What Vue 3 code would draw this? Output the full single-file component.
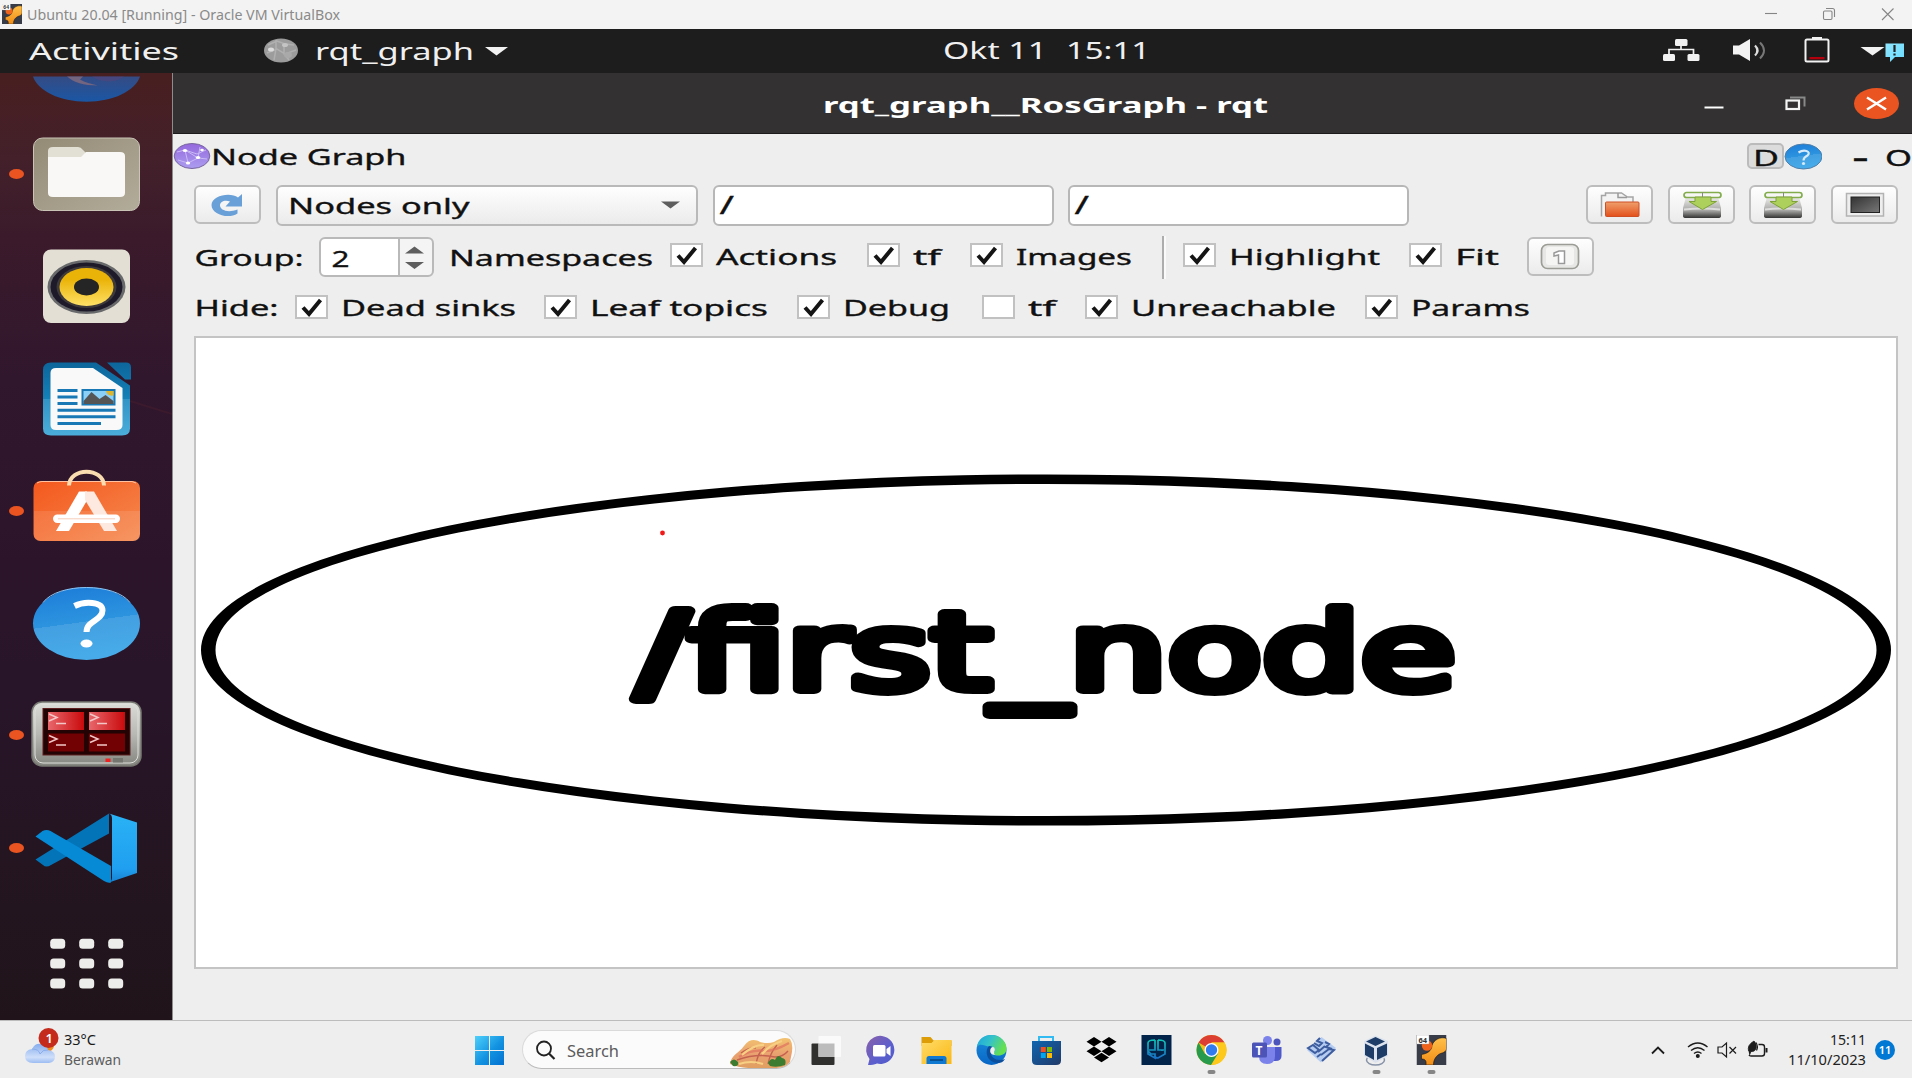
<script setup>
import { h } from 'vue'

const T = (p) =>
  h('svg', { class: 'fit', width: p.box || p.w, height: p.h || 40 }, [
    h('text', { x: p.x || 0, y: p.y, textLength: p.w, lengthAdjust: 'spacingAndGlyphs', 'font-size': p.s || 22.5, fill: 'currentColor' }, p.t),
  ])
T.props = ['t', 'w', 'box', 'h', 'y', 's', 'x']

const groupChecks = [
  { t: 'Actions', w: 121, slot: 151, on: true },
  { t: 'tf', w: 28, slot: 57, on: true },
  { t: 'Images', w: 116, slot: 146, on: true },
]
const viewChecks = [
  { t: 'Highlight', w: 151, slot: 180, on: true },
  { t: 'Fit', w: 44, slot: 72, on: true },
]
const hideChecks = [
  { t: 'Dead sinks', w: 175, slot: 203, on: true },
  { t: 'Leaf topics', w: 178, slot: 207, on: true },
  { t: 'Debug', w: 107, slot: 139, on: true },
  { t: 'tf', w: 28, slot: 57, on: false },
  { t: 'Unreachable', w: 205, slot: 234, on: true },
  { t: 'Params', w: 119, slot: 147, on: true },
]
const panes = [[48, 33], [89, 33], [48, 54.5], [89, 54.5]]
</script>

<template>
  <div class="screen">
    <svg class="defs" width="0" height="0">
      <defs>
        <linearGradient id="gFiles" x1="0" y1="0" x2="1" y2="1"><stop offset="0" stop-color="#948b76" /><stop offset="1" stop-color="#b2ac9a" /></linearGradient>
        <linearGradient id="gFox" x1="0" y1="0" x2="0" y2="1"><stop offset="0" stop-color="#354b83" /><stop offset="1" stop-color="#1a57a5" /></linearGradient>
        <linearGradient id="gSpk" x1="0" y1="0" x2="0" y2="1"><stop offset=".3" stop-color="#eab308" /><stop offset="1" stop-color="#ffe166" /></linearGradient>
        <linearGradient id="gDoc" x1="0" y1="0" x2="0" y2="1"><stop offset="0" stop-color="#0d659b" /><stop offset=".5" stop-color="#1481b7" /><stop offset=".5" stop-color="#3194c5" /><stop offset="1" stop-color="#4badd9" /></linearGradient>
        <linearGradient id="gBag" x1="0" y1="0" x2="1" y2="1"><stop offset="0" stop-color="#f4581d" /><stop offset="1" stop-color="#f58a50" /></linearGradient>
        <linearGradient id="gHelp" x1="0" y1="0" x2="0.2" y2="1"><stop offset="0" stop-color="#1c7bd8" /><stop offset=".55" stop-color="#2c94df" /><stop offset=".55" stop-color="#439fe1" /><stop offset="1" stop-color="#47abe9" /></linearGradient>
        <linearGradient id="gMon" x1="0" y1="0" x2="0" y2="1"><stop offset="0" stop-color="#dcdcd8" /><stop offset=".5" stop-color="#b8b8b4" /><stop offset="1" stop-color="#84857f" /></linearGradient>
        <linearGradient id="gRed" x1="0" y1="0" x2="1" y2="0"><stop offset="0" stop-color="#e8676c" /><stop offset="1" stop-color="#c90a0c" /></linearGradient>
        <linearGradient id="gCode" x1="0" y1="0" x2="0" y2="1"><stop offset="0" stop-color="#29b2f5" /><stop offset=".8" stop-color="#209ff0" /><stop offset="1" stop-color="#1780cf" /></linearGradient>
        <linearGradient id="gOrb" x1="0" y1="0" x2="0" y2="1"><stop offset="0" stop-color="#9468dd" /><stop offset="1" stop-color="#ac9df0" /></linearGradient>
        <linearGradient id="gOpen" x1="0" y1="0" x2="0" y2="1"><stop offset="0" stop-color="#efa06d" /><stop offset="1" stop-color="#e3501b" /></linearGradient>
        <linearGradient id="gDisk" x1="0" y1="0" x2="0" y2="1"><stop offset="0" stop-color="#eeeeec" /><stop offset=".65" stop-color="#a5a5a3" /><stop offset="1" stop-color="#333" /></linearGradient>
        <linearGradient id="gScr" x1="0" y1="0" x2="1" y2="1"><stop offset="0" stop-color="#333" /><stop offset="1" stop-color="#777" /></linearGradient>
        <linearGradient id="gWin" x1="0" y1="0" x2="1" y2="1"><stop offset="0" stop-color="#4ed0fb" /><stop offset=".55" stop-color="#1292e0" /><stop offset="1" stop-color="#0370d0" /></linearGradient>
        <linearGradient id="gCloud" x1="0" y1="0" x2="0" y2="1"><stop offset="0" stop-color="#86adee" /><stop offset=".7" stop-color="#cfdffa" /><stop offset="1" stop-color="#9cbcf2" /></linearGradient>
        <linearGradient id="gChat" x1="0" y1="0" x2="1" y2="1"><stop offset="0" stop-color="#8a60a8" /><stop offset=".6" stop-color="#5b5fce" /><stop offset="1" stop-color="#5059c9" /></linearGradient>
        <linearGradient id="gFold" x1="0" y1="0" x2="1" y2="1"><stop offset="0" stop-color="#ffdc6b" /><stop offset="1" stop-color="#fbb811" /></linearGradient>
        <linearGradient id="gEdge" x1="0" y1="0" x2="1" y2=".4"><stop offset="0" stop-color="#1aa6df" /><stop offset=".5" stop-color="#35c3c8" /><stop offset="1" stop-color="#66e04f" /></linearGradient>
        <linearGradient id="gEdge2" x1="0" y1="0" x2="0" y2="1"><stop offset="0" stop-color="#1b8fdc" /><stop offset="1" stop-color="#0866c6" /></linearGradient>
        <linearGradient id="gStore" x1="0" y1="0" x2="1" y2="1"><stop offset="0" stop-color="#0f65b0" /><stop offset="1" stop-color="#213a69" /></linearGradient>
        <linearGradient id="gShield" x1="0" y1="0" x2="0" y2="1"><stop offset="0" stop-color="#12c2b4" /><stop offset="1" stop-color="#1a72c5" /></linearGradient>
        <linearGradient id="gVx" x1="0" y1="0" x2="0" y2="1"><stop offset="0" stop-color="#ffc04a" /><stop offset="1" stop-color="#f28c14" /></linearGradient>
        <linearGradient id="gFood" x1="0" y1="0" x2="0" y2="1"><stop offset="0" stop-color="#f2c26f" /><stop offset=".55" stop-color="#e9a070" /><stop offset="1" stop-color="#e0a060" /></linearGradient>
        <linearGradient id="gBubble" x1="0" y1="0" x2="1" y2="1"><stop offset="0" stop-color="#8fe6ff" /><stop offset="1" stop-color="#6cdcff" /></linearGradient>
        <symbol id="vbox64" viewBox="0 0 30 30">
          <rect width="30" height="30" fill="#383b48" />
          <path d="M30 3.500C24 1 17 5 15.500 10.500 15 16 11 18.500 5 19.500v4.500c4 0 5 2 4.500 6H17c0-6 3-9.500 7-11.500 4-1 6-2.500 6-5z" fill="url(#gVx)" stroke="#15161c" stroke-width=".6" />
          <circle cx="10.500" cy="10.500" r="5.200" fill="#f0641c" />
          <rect width="12.500" height="9" fill="#fff" stroke="#999" stroke-width=".4" />
          <text x="2" y="7.500" font-size="7.500" font-weight="700" fill="#333">64</text>
        </symbol>
      </defs>
    </svg>

    <header class="host-bar">
      <svg class="host-icon" width="20" height="20"><use href="#vbox64" width="20" height="20" /></svg>
      <T t="Ubuntu 20.04 [Running] - Oracle VM VirtualBox" :w="313" :h="29" :y="19.500" :s="14.500" />
      <svg class="host-controls" width="150" height="29" fill="none" stroke="#858585" stroke-width="1.100">
        <path d="M3 13.500h12" />
        <rect x="61.500" y="11" width="8.500" height="8.500" rx="1.200" />
        <path d="M64 8.500h6.500a2 2 0 0 1 2 2v6.500" />
        <path d="M120 8.500l11.500 11.500M131.500 8.500l-11.500 11.500" />
      </svg>
    </header>

    <div class="guest">
      <nav class="top-bar">
        <T class="activities" t="Activities" :w="150" :h="44" :y="31" :s="23" />
        <svg class="orb" width="34" height="44"><ellipse cx="17" cy="21.500" rx="17" ry="12" fill="#9c9c9c" /><path d="M4 16l9-4 8 3 9 1M3 24l10-4 8 5 11-4M12 11v9l-2 11M20 14v11l5 6" stroke="#b0b0b0" stroke-width="1.500" fill="none" /><ellipse cx="7" cy="20.500" rx="3" ry="2" fill="#dcdcdc" /><ellipse cx="21" cy="16" rx="3" ry="2" fill="#c4c4c4" /><ellipse cx="24" cy="26" rx="4" ry="3" fill="#a9a9a9" /></svg>
        <T t="rqt_graph" :w="159" :h="44" :y="31" :s="23" />
        <svg class="caret" width="23" height="44"><path d="M0 18h23l-11.500 8.500z" fill="#f2f2f2" /></svg>
        <div class="clock">
          <T t="Okt 11" :w="104" :box="123" :h="44" :y="29.500" :s="23" />
          <T t="15:11" :w="84" :h="44" :y="29.500" :s="23" />
        </div>
        <svg class="status" width="252" height="44">
          <g fill="#f2f2f2">
            <rect x="15" y="10" width="12.500" height="7" rx="1.500" /><rect x="3" y="25" width="12" height="7" rx="1.500" /><rect x="27.500" y="25" width="12" height="7" rx="1.500" />
            <path d="M9 25v-4.500h24.500V25M21 17v4" fill="none" stroke="#f2f2f2" stroke-width="1.700" />
            <path d="M73 16.500h6l11-6.500v22l-11-6.500h-6z" />
            <path d="M95 16.500q5 5 0 10" fill="none" stroke="#ddd" stroke-width="2.200" /><path d="M100 13.500q8 8 0 16" fill="none" stroke="#777" stroke-width="2" />
            <rect x="145.500" y="10.500" width="23" height="22" rx="1.500" fill="none" stroke="#f2f2f2" stroke-width="2" /><rect x="152" y="8" width="10" height="3" />
            <rect x="149.500" y="28" width="15" height="2.300" fill="#b3000c" />
            <path d="M200.500 18h24l-12 8.500z" />
          </g>
          <path d="M225.500 14.500h18.500v13.500h-9l-5 5v-5h-4.500z" fill="url(#gBubble)" />
          <path d="M234.500 16v7M234.500 24.500v2" stroke="#222" stroke-width="2.200" />
        </svg>
      </nav>

      <div class="desktop">
        <aside class="dock">
          <svg width="172" height="45"><path d="M33 3.500h107C135 18 113 28.700 86.500 28.700S38 18 33 3.500z" fill="url(#gFox)" /><path d="M92 3.500h32c-7 6-22 7-32 0z" fill="#53457a" opacity=".6" /><path d="M67 3.500h16l-3 3c5 3 11 4 18 6-15 0-24-3-31-9z" fill="#73647f" /></svg>
          <svg width="172" height="112.300">
            <ellipse class="run" cx="16.500" cy="56" rx="7.500" ry="5" />
            <rect x="33.500" y="20" width="106" height="72.500" rx="9" fill="url(#gFiles)" stroke="#c9c4b6" stroke-width="1" />
            <path d="M48 39v-6q0-4 5-4h25q3 0 5 3l4 4v10H48z" fill="#e2dfd5" />
            <path d="M48 39h33l5-5h34q5 0 5 4v37q0 4-5 4H53q-5 0-5-4z" fill="#f9f8f6" />
          </svg>
          <svg width="172" height="112.300">
            <rect x="43" y="19.500" width="87" height="73.500" rx="8" fill="#e3dfd4" />
            <ellipse cx="86.500" cy="57" rx="39" ry="27" fill="#68696b" /><ellipse cx="86.500" cy="57" rx="36" ry="24.500" fill="#1e1a29" /><ellipse cx="86.500" cy="57" rx="30" ry="21" fill="#3e3a3b" /><ellipse cx="86.500" cy="57" rx="27" ry="19" fill="url(#gSpk)" /><ellipse cx="86.500" cy="57" rx="12.500" ry="8.500" fill="#252525" />
          </svg>
          <svg width="172" height="112.300">
            <path d="M130 58l42 13" stroke="#3a1a2c" stroke-width="2" />
            <path d="M51 19.500h45l34 23v43q0 7-8 7H51q-8 0-8-7V27q0-7.500 8-7.500zM107 19.500h19q5 0 5 5v12h-6z" fill="url(#gDoc)" />
            <path d="M56 25h37l29.500 20v37q0 5-6 5H56q-5.500 0-5.500-5V30q0-5 5.500-5z" fill="#f9f9f9" />
            <path d="M57.500 47.500h20M57.500 54h20M57.500 60.500h20M57.500 67.200h58M57.500 73.800h58M57.500 80.500H101" stroke="#1878b6" stroke-width="3" />
            <rect x="82.500" y="47" width="32" height="14.500" fill="#8bd0f7" stroke="#1878b6" stroke-width="2" />
            <path d="M83.500 61v-3l8-9 8 7 6-4 8 6v3z" fill="#555" /><path d="M106 48h7.500v4.500q-6 1-7.500-4.500z" fill="#deb52b" />
          </svg>
          <svg width="172" height="112.300">
            <ellipse class="run" cx="16.500" cy="56" rx="7.500" ry="5" />
            <rect x="33.500" y="26" width="106.500" height="60" rx="7" fill="url(#gBag)" /><path d="M34 56h106v24q0 6-7 6H41q-7 0-7-6z" fill="#fff" opacity=".1" />
            <path d="M37 28q3-1.500 5-1.500h90l4 1.500" stroke="#ffc3a4" fill="none" />
            <path d="M69 30.500C70 12 103 12 104 30.500" fill="none" stroke="#f9dcb0" stroke-width="4" />
            <path d="M79 36.500h8v9L69 76H56z" fill="#fff" /><path d="M85 36.500h9L117 76h-13L85 45z" fill="#fde9df" />
            <rect x="53" y="59.500" width="67" height="8.500" rx="4.200" fill="#fff" /><path d="M58 63.800h57" stroke="#f8cdb9" />
          </svg>
          <svg width="172" height="112.300">
            <ellipse cx="86.500" cy="56.500" rx="53.500" ry="36.500" fill="url(#gHelp)" /><path d="M43 35.500C58 15.500 115 15.500 130 35.500" fill="none" stroke="#8cc5f3" stroke-width="1" />
            <path d="M74.500 39c10-5 28-4.500 28 4.500 0 10-16 10-16 21.500" fill="none" stroke="#fff" stroke-width="6" /><ellipse cx="86.500" cy="76.500" rx="6" ry="4" fill="#fff" />
          </svg>
          <svg width="172" height="112.300">
            <ellipse class="run" cx="16.500" cy="56" rx="7.500" ry="5" />
            <rect x="32" y="23" width="109" height="64" rx="10" fill="url(#gMon)" stroke="#777872" stroke-width="1.500" /><rect x="35" y="25.500" width="103" height="58.500" rx="8" fill="none" stroke="#dededb" stroke-width="1" />
            <rect x="43" y="29.500" width="87" height="46.500" fill="#230303" stroke="#5f1e20" />
            <g v-for="([x, y], i) in panes" :key="i"><rect :x="x" :y="y" width="36" height="18" :fill="i < 2 ? 'url(#gRed)' : '#720103'" /><path :d="`M${x + 1} ${y + 2}l8 3.500-8 3.500M${x + 8} ${y + 11.500}h10`" fill="none" stroke="#f1c7c8" stroke-width="1.500" /></g>
            <rect x="105.500" y="79.500" width="5" height="3.500" fill="#ef2020" /><rect x="113" y="79" width="10" height="4.500" fill="#74756f" />
          </svg>
          <svg width="172" height="112.300">
            <ellipse class="run" cx="16.500" cy="56" rx="7.500" ry="5" />
            <path d="M35.500 67.500L109 21.500v20L51 73q-5 3-8 0z" fill="#0474b8" />
            <path d="M35.500 44.500l7-5.500q4-2 8 0L111 74v16.500q-3 1-7-1.500z" fill="#068ad6" />
            <path d="M109 21.500l28 9v50.500l-28 9.500q3-1.500 3-5v-59q0-4-3-5z" fill="url(#gCode)" />
          </svg>
          <svg width="172" height="112.300" fill="#ededeb">
            <template v-for="r in 3" :key="r"><rect v-for="c in 3" :key="c" :x="21.200 + c * 29" :y="15 + r * 19.800" width="15" height="10" rx="3.500" /></template>
          </svg>
        </aside>

        <main class="window">
          <div class="title-bar">
            <T class="bold" t="rqt_graph__RosGraph - rqt" :w="445" :h="60" :y="39.500" :s="22" />
            <svg class="win-controls" width="220" height="60">
              <path d="M12.500 34.500h19" stroke="#fff" stroke-width="2" /><path d="M98 24.500h14.500v9" fill="none" stroke="#888" stroke-width="2" /><rect x="94.500" y="27.500" width="12.500" height="8.500" fill="none" stroke="#f4f4f4" stroke-width="2.200" />
              <ellipse cx="184.500" cy="30.500" rx="22.500" ry="15.500" fill="#e95420" /><path d="M175 24.500l19 12M194 24.500l-19 12" stroke="#fff" stroke-width="2.500" />
            </svg>
          </div>

          <div class="plugin-bar">
            <svg width="38" height="36"><ellipse cx="19" cy="22" rx="17.800" ry="12.500" fill="url(#gOrb)" stroke="#78669f" /><path d="M4 18l8-2 12 4 9-4M12 16l3 13 10-5-13-8M5 26l10 3M27 13l-2 11 9 1" fill="none" stroke="#cabaf5" stroke-width="1" /><g fill="#fff"><ellipse cx="12" cy="16.500" rx="2.200" ry="1.500" /><ellipse cx="25" cy="23.500" rx="2.200" ry="1.500" /><ellipse cx="15" cy="29" rx="2.200" ry="1.500" /><ellipse cx="29" cy="16" rx="1.800" ry="1.200" /></g></svg>
            <T t="Node Graph" :w="195.500" :h="36" :y="31" />
            <div class="plugin-tools">
              <span class="dock-btn"><T t="D" :w="26" :h="26" :y="20.500" :s="22" /></span>
              <svg width="38" height="27"><ellipse cx="19.500" cy="13.500" rx="18.500" ry="12.500" fill="url(#gHelp)" stroke="#4d7eaa" /><path d="M14.500 9.500q4-2.500 8-1.500 4 1.500 1 4.500-4 2-4 5" fill="none" stroke="#d5eafa" stroke-width="2.200" /><circle cx="19.500" cy="20.500" r="1.600" fill="#d5eafa" /></svg>
              <T class="dash bold" t="-" :w="15" :h="26" :y="22" :s="22" />
              <T class="oh" t="O" :w="27" :h="26" :y="22.500" />
            </div>
          </div>

          <div class="row files">
            <button class="btn"><svg width="64" height="36"><path d="M43 26.500c-9 6-26 1-26-8.500S36 4.500 43.500 10.500l4-3.500v12.500H31l4.500-5c-5-2-10 0-10 4s7 8 17.500 4z" fill="#6aa0d8" transform="translate(-1.500 0)" /></svg></button>
            <div class="combo"><T t="Nodes only" :w="181.500" :h="38" :y="26.500" /><svg width="19" height="38"><path d="M0 14.500h19l-9.500 7z" fill="#5e5e5e" /></svg></div>
            <div class="field"><T t="/" :w="14.500" :x="1.500" :h="38" :y="27" :s="25" /></div>
            <div class="field second"><T t="/" :w="14.500" :x="1.500" :h="38" :y="27" :s="25" /></div>
            <div class="actions">
              <button class="btn"><svg width="64" height="36"><path d="M13.500 29.500V8.500h4V6h16l6 4H45v7.500" fill="#f3f3f3" stroke="#a5a5a5" stroke-width="1.500" /><path d="M30 6v4.500h9" fill="none" stroke="#999" stroke-width="1.500" /><rect x="17.500" y="15" width="33.500" height="14.500" rx="1" fill="url(#gOpen)" stroke="#cf4f24" /></svg></button>
              <button v-for="n in 2" :key="n" class="btn"><svg width="64" height="36"><path d="M16 10h32l3 11v8q0 2-3 2H16q-3 0-3-2v-8z" fill="url(#gDisk)" /><path d="M14 22.500q18-2 36 0" stroke="#ddd" fill="none" stroke-width="2" /><rect x="14" y="5.500" width="37" height="5" rx="2.500" fill="#f7f7f5" stroke="#83ad4d" stroke-width="1.700" /><path d="M32.500 5.500v5" stroke="#888" /><path d="M25 10h16v4.500h5.500L32.500 22.500 19 14.500h6z" fill="#add05c" stroke="#7ea238" /></svg></button>
              <button class="btn"><svg width="64" height="36"><rect x="13.500" y="6.500" width="37" height="22.500" fill="#eee" stroke="#b3b3b3" stroke-width="1.500" /><rect x="18" y="10" width="28.500" height="15.500" fill="url(#gScr)" stroke="#222" /></svg></button>
            </div>
          </div>

          <div class="row group">
            <T t="Group:" :w="109" :box="125" :x=".5" :h="40" :y="29" />
            <div class="spin"><T t="2" :w="18" :x=".5" :h="37" :y="27.500" /><svg width="34" height="37"><path d="M7 14.500h19l-9.500-7zM7 23h19l-9.500 7z" fill="#5e5e5e" /></svg></div>
            <T t="Namespaces" :w="204" :box="221" :h="40" :y="29" />
            <label v-for="c in groupChecks" :key="c.t" class="check"><svg width="33" height="24"><rect class="box" x="1" y="1" width="31" height="22" /><path v-if="c.on" class="tick" d="M8 12.500l6 6.500 11.500-14" /></svg><T :t="c.t" :w="c.w" :box="c.slot" :h="24" :y="21.500" /></label>
            <i class="divider"></i>
            <label v-for="c in viewChecks" :key="c.t" class="check"><svg width="33" height="24"><rect class="box" x="1" y="1" width="31" height="22" /><path v-if="c.on" class="tick" d="M8 12.500l6 6.500 11.500-14" /></svg><T :t="c.t" :w="c.w" :box="c.slot" :h="24" :y="21.500" /></label>
            <button class="btn"><svg width="64" height="37"><rect x="12.500" y="5.500" width="37" height="24" rx="6" fill="#e7e7e5" stroke="#9c9c96" stroke-width="1.700" /><rect x="17" y="8" width="28" height="18" rx="3" fill="#f5f5f4" /><path d="M25 14l5-2h5.500v12.500h-6v-8.500l-4.500 1z" fill="#fff" stroke="#999" stroke-width="1.500" /></svg></button>
          </div>

          <div class="row hide">
            <T t="Hide:" :w="84" :box="101" :x=".5" :h="40" :y="28" />
            <label v-for="(c, i) in hideChecks" :key="i" class="check"><svg width="33" height="24"><rect class="box" x="1" y="1" width="31" height="22" /><path v-if="c.on" class="tick" d="M8 12.500l6 6.500 11.500-14" /></svg><T :t="c.t" :w="c.w" :box="c.slot" :h="24" :y="21" /></label>
          </div>

          <div class="canvas">
            <svg width="1700" height="629" viewBox="196 337.500 1700 629">
              <path fill-rule="evenodd" d="M201 649.500a845 175.500 0 1 0 1690 0a845 175.500 0 1 0-1690 0zM215.500 649.500a830.500 166 0 1 0 1661 0a830.500 166 0 1 0-1661 0z" />
              <text class="node" x="636" y="688" textLength="820" lengthAdjust="spacingAndGlyphs">/first_node</text>
              <circle cx="662.500" cy="532.500" r="2.400" fill="#f01818" />
            </svg>
          </div>
        </main>
      </div>
    </div>

    <footer class="taskbar">
      <div class="weather">
        <svg width="64" height="57"><circle cx="47" cy="24" r="7" fill="#f28a1c" /><path d="M33 42q-8 0-8-7 0-6 7-7 3-6 9-5 6 0 7 6 7 1 7 6.500t-6 6.500z" fill="url(#gCloud)" /><path d="M32 28q7 0 8 5 3-5 8-4" fill="none" stroke="#7fa6e8" stroke-width=".8" /><circle cx="48.500" cy="17" r="10" fill="#c42b1c" /><text x="45.500" y="21.500" font-size="13" font-weight="600" fill="#fff">1</text></svg>
        <div class="lines"><T class="dark" t="33°C" :w="32" :h="20" :y="15" :s="14.500" /><T t="Berawan" :w="57" :h="20" :y="15" :s="14.500" /></div>
      </div>
      <svg class="start" width="29" height="57"><path d="M0 15h14v14H0zM15 15h14v14H15zM0 30h14v14H0zM15 30h14v14H15z" fill="url(#gWin)" /></svg>
      <div class="search">
        <svg width="22" height="38"><circle cx="8" cy="17.500" r="7" fill="none" stroke="#222" stroke-width="1.800" /><path d="M13 22.500l5.500 5.500" stroke="#222" stroke-width="2.200" /></svg>
        <T t="Search" :w="52" :h="38" :y="25.500" :s="15.500" />
        <svg class="food" width="64" height="38"><path d="M1 33C2 24 10 22 15 15 20 8 26 8 31 11q8 2 14 0 9-6 16-3 4 6 1 18l-2 9q-15 4-30 2-17 1-29-4z" fill="url(#gFood)" /><path d="M12 22q8-6 15-5M27 33q2-12 9-17M39 33q2-11 9-19M8 29q20-7 38-3 8 0 13-6" fill="none" stroke="#c4624f" stroke-width="1.400" /><path d="M10 26q13-8 26-6 10 0 24-8" fill="none" stroke="#e0705f" stroke-width="2.500" opacity=".7" /><path d="M13 24q13-11 22-10M33 23q9-10 20-13M10 33q12-4 24 0" fill="none" stroke="#f7d083" stroke-width="2.200" /><path d="M1 31q4-5 8 0 1 5-5 4zM39 32q3-6 7-3 3-7 7-2 5 1 3 7-8 3-15 1z" fill="#3c7c31" /></svg>
      </div>
      <div class="apps">
        <svg width="55" height="57"><rect x="12.500" y="22.500" width="23" height="21.500" rx="1" fill="#30302f" /><rect x="19.500" y="15" width="22.500" height="21" rx="1" fill="#fafafa" /><rect x="19.500" y="22.500" width="16" height="13.500" fill="#bcbcbc" /></svg>
        <svg width="55" height="57"><path d="M28 15a14 14 0 1 1-5 27.500c-3 1.500-5 1.500-9 1.500l1.500-6A14 14 0 0 1 28 15z" fill="url(#gChat)" /><rect x="19" y="24" width="12.500" height="11.500" rx="1.500" fill="#fff" /><path d="M32.500 28l4-3v10l-4-3z" fill="#fff" /></svg>
        <svg width="55" height="57"><path d="M12.500 16h9l3 3.500h18V25h-30z" fill="#dc9d08" /><path d="M12.500 22h10l3-3h17v24h-30z" fill="url(#gFold)" /><path d="M17.500 43v-5.500q0-2.500 2.500-2.500h15q2.500 0 2.500 2.500V43z" fill="#0f78d0" /><path d="M21 39h13" stroke="#06447f" stroke-width="1.500" /></svg>
        <svg width="55" height="57"><circle cx="27.500" cy="29" r="15" fill="url(#gEdge2)" /><path d="M13 26C14 18 20 14 27.500 14c8 0 15 6 15 13.500 0 5-4 7-8 7-5 0-6-2-4-4 1-3-1-5-5-5-5 0-9-4-12.500.5z" fill="url(#gEdge)" /><path d="M25 25c-5 5-2 17 9 17 3 0 5-1 7-4-7 3-15-1-14-7 0-2 1-3 2-4q-1-2-4-2z" fill="#0c4f9c" /><path d="M27 27q2-2 3.500 0 1 2-.3 4-.8 2 1 3-4 0-5-3-.3-2.500.8-4z" fill="#eee" /></svg>
        <svg width="55" height="57"><path d="M20 22v-6h14v6" fill="none" stroke="#32baf2" stroke-width="2" /><path d="M13 20h29v19.500q0 4.500-5 4.500H18q-5 0-5-4.500z" fill="url(#gStore)" /><path d="M21.800 26h5v5h-5z" fill="#f25022" /><path d="M28 26h5v5h-5z" fill="#7fba00" /><path d="M21.800 32h5v5h-5z" fill="#00a4ef" /><path d="M28 32h5v5h-5z" fill="#ffb900" /></svg>
        <svg width="55" height="57"><path d="M20 16l7.500 4.800L20 25.500l-7.500-4.700zM35 16l7.500 4.800-7.500 4.700-7.500-4.700zM20 25.500l7.500 4.800L20 35l-7.500-4.700zM35 25.500l7.500 4.800L35 35l-7.500-4.700zM20 36.500l7.500-4.700 7.500 4.700-7.500 4.800z" /></svg>
        <svg width="55" height="57"><rect x="12.500" y="14" width="30" height="30" fill="#02244b" /><path d="M26 19q-7 0-7 3v11l7 4v-4h-4l-3-3M26 19v10h-6M29 19q7 0 7 3v11l-7 4q-3 0-3-2M29 19v10h6M33 30v-1" fill="none" stroke="url(#gShield)" stroke-width="1.700" /></svg>
        <svg width="55" height="57"><circle cx="27.500" cy="29" r="15" fill="#f1bf1a" /><path d="M27.500 29L14.500 21.500A15 15 0 0 1 40.500 21.500H27.500z" fill="#dc3e32" /><path d="M14.500 21.500a15 15 0 0 0 12.500 22.500L34 32.500 21 33z" fill="#279b4b" /><path d="M27.500 44a15 15 0 0 0 13-22.500H27.500l7 11z" fill="#fdc91d" /><circle cx="27.500" cy="29" r="7" fill="#fff" /><circle cx="27.500" cy="29" r="5.700" fill="#327bee" /><rect class="open" x="23.500" y="49" width="8" height="4" rx="2" /></svg>
        <svg width="55" height="57"><circle cx="38" cy="21" r="3.500" fill="#4c55bb" /><circle cx="28.500" cy="19.500" r="4.500" fill="#7b83eb" /><path d="M34 26h8.500v9q0 5-6 5h-3z" fill="#5059c9" /><path d="M20 26h16v9q0 8-8 8t-8-8z" fill="#7b83eb" /><rect x="13" y="21.500" width="15" height="15" rx="1.500" fill="#4d54b8" /><text x="16.500" y="33.500" font-size="12" font-weight="700" fill="#fff">T</text></svg>
        <svg width="55" height="57"><path d="M27.500 16l14.500 11-15 14.500L13 29z" fill="#b6cdf1" /><path d="M26 17l-3 3 5 2-3 3-5-3M31 21l4 2-3 3 6 2M14 27l5-3 6 5-4 3zM24 31l7-6M27 34l8-6 5 1-12 11M23 36l4-3" fill="none" stroke="#3d5d9f" stroke-width="2" /></svg>
        <svg width="55" height="57"><ellipse cx="26.500" cy="39" rx="9" ry="5" fill="none" stroke="#8793a8" stroke-width="1.500" /><path d="M26.500 14.500L39 20v15l-12.500 7L15 35V20z" fill="#dce3ee" /><path d="M26.500 16L36 20.500l-9.500 4.500-9.500-4.500zM16 22.500l9 4.500v12l-9-5zM38 22.500L28 27v12l10-5z" fill="#1d3d68" /><rect class="open" x="23.500" y="49" width="8" height="4" rx="2" /></svg>
        <svg width="55" height="57"><use href="#vbox64" x="12.500" y="14" width="30" height="30" /><rect class="open" x="23.500" y="49" width="8" height="4" rx="2" /></svg>
      </div>
      <div class="tray">
        <svg width="130" height="57" fill="none" stroke="#1c1c1c" stroke-width="1.400">
          <path d="M4 32.500l6-6 6 6" stroke-width="1.800" />
          <path d="M40 26q9.800-8 19.500 0M43 29.500q6.800-5.500 13.500 0M46 32.500q3.800-3 7.500 0" /><circle cx="49.800" cy="35" r="1.300" fill="#1c1c1c" />
          <path d="M70 26h4l4.500-4v14l-4.500-4h-4zM81.500 26l6.500 6.500M88 26l-6.500 6.500" stroke-width="1.200" />
          <path d="M110.500 23.500h3.500q2.500 0 2.500 2.500v6.500q0 2.500-2.500 2.500h-11q-1.500 0-2-1" /><path d="M118.500 27v4.500" stroke-width="2" />
          <path d="M100.500 30q-1.500-6 5.500-10 3 3 2.200 7-1.200 4-5.200 3.500l-1.500 3.500" fill="#1c1c1c" stroke-width=".8" /><path d="M108 21.500q2.500 4 .5 8" stroke-width="1.200" />
        </svg>
        <div class="stamp"><T t="15:11" :w="36" :h="20" :y="15" :s="14.500" /><T t="11/10/2023" :w="78" :h="20" :y="15" :s="14.500" /></div>
        <span class="count">11</span>
      </div>
    </footer>
  </div>
</template>

<style>
body { margin: 0; overflow: hidden; }
</style>

<style scoped>
.screen { width: 1912px; height: 1078px; display: flex; flex-direction: column; overflow: hidden; background: #eee; font-family: "Noto Sans", "Open Sans", sans-serif; color: #111; }
svg { display: block; flex: none; }
.defs { position: absolute; }
.fit { overflow: visible; }
.bold { font-weight: 700; }
button { font: inherit; padding: 0; }

.host-bar { height: 29px; flex: none; display: flex; background: #f3f3f3; color: #8a8a8a; }
.host-icon { margin: 4px 5px 0 2px; }
.host-controls { margin-left: auto; }

.guest { height: 991px; flex: none; display: flex; flex-direction: column; }
.top-bar { height: 44px; flex: none; display: flex; background: #1d1d1d; color: #f0f0f0; }
.activities { margin: 0 85px 0 29px; }
.orb { margin-right: 17px; }
.caret { margin-left: 11px; }
.clock { display: flex; margin-left: 435px; }
.status { margin-left: auto; }

.desktop { display: flex; height: 947px; }
.dock { width: 172px; flex: none; box-sizing: border-box; display: flex; flex-direction: column; background: linear-gradient(#481f20, #43202a 9%, #3a1a2b 18%, #31172d 32%, #2d152b 48%, #281529 66%, #23151f 88%, #20141a); overflow: hidden; }
.run { fill: #e95420; }

.window { flex: 1; min-width: 0; display: flex; flex-direction: column; overflow: hidden; background: #eee; border-left: 1px solid #8f8c8d; }
.title-bar { height: 61px; box-sizing: border-box; flex: none; display: flex; background: #333132; border-bottom: 1px solid #1c1a1b; color: #fff; padding-left: 650px; }
.win-controls { margin-left: auto; }

.plugin-bar { display: flex; height: 51px; flex: none; }
.plugin-bar .fit, .row .fit { stroke: currentColor; stroke-width: .35px; }
.plugin-tools { display: flex; margin: 9px 0 0 auto; width: 165px; }
.dock-btn { width: 40px; height: 26px; box-sizing: border-box; margin-right: 0; padding-left: 4px; border: 2px solid #bbb; border-radius: 5px; background: #dcdcdc; }
.dash { margin-left: 31px; }
.oh { margin-left: 17px; }

.row { display: flex; flex: none; padding-left: 21px; }
.btn { width: 67px; height: 39px; flex: none; box-sizing: border-box; border: 2px solid #bdbdbd; border-radius: 6px; background: linear-gradient(#fefefe, #ebebeb); }
.files { height: 52px; }
.combo { width: 422px; height: 41px; box-sizing: border-box; display: flex; justify-content: space-between; margin-left: 15px; padding: 0 16px 0 10px; border: 2px solid #b9b9b9; border-radius: 6px; background: linear-gradient(#fefefe, #ebebeb); }
.field { width: 341px; height: 41px; box-sizing: border-box; margin-left: 15px; padding-left: 3px; border: 2px solid #b7b7b7; border-radius: 6px; background: #fff; }
.field.second { margin-left: 14px; }
.actions { display: flex; gap: 14.600px; margin: 0 14px 0 auto; }

.group { height: 58px; }
.spin { width: 115px; height: 40px; box-sizing: border-box; display: flex; justify-content: space-between; margin-right: 15px; padding-left: 10px; border: 2px solid #b9b9b9; border-radius: 6px; background: linear-gradient(90deg, #fff 77px, #b9b9b9 77px, #b9b9b9 79px, #f4f4f4 79px); }
.check { display: flex; gap: 13px; margin-top: 6px; height: 24px; }
.box { fill: #fff; stroke: #c1c1c1; stroke-width: 2; }
.tick { fill: none; stroke: #151515; stroke-width: 4; }
.divider { width: 2px; height: 43px; margin: -1px 17px 0 0; background: #adadad; border-right: 2px solid #fafafa; flex: none; }
.hide { height: 47px; }
.hide .check { margin-top: 0; }
.hide > .fit { margin-top: -7px; }

.canvas { margin-left: 21px; width: 1700px; height: 629px; flex: none; border: 2px solid #c4c4c4; background: #fff; margin-top: -6px; }
.node { font-family: "DejaVu Sans", sans-serif; font-size: 107px; stroke: #000; stroke-width: 10px; stroke-linejoin: round; }

.taskbar { height: 58px; box-sizing: border-box; flex: none; display: flex; border-top: 1px solid #bcbcbc; background: #eee; color: #5c5c5c; }
.weather { width: 475px; display: flex; }
.lines { padding-top: 9px; }
.dark { color: #1a1a1a; }
.start { margin-right: 18px; }
.search { width: 274px; height: 39px; box-sizing: border-box; display: flex; margin: 9px 2.500px 0 0; padding-left: 13px; border: 1px solid #dadada; border-bottom-color: #bbb; border-radius: 20px; background: #fbfbfb; overflow: hidden; }
.search .fit { margin-left: 9px; }
.food { margin-left: auto; margin-right: 2px; }
.apps { display: flex; }
.open { fill: #868686; }
.tray { display: flex; width: 264px; margin-left: auto; color: #222; }
.stamp { width: 88px; padding-top: 9px; display: flex; flex-direction: column; align-items: flex-end; }
.count { width: 20px; height: 20px; margin: 19px 0 0 9px; border-radius: 50%; background: #0078d4; color: #fff; font-size: 11px; font-weight: 600; line-height: 20px; text-align: center; }
</style>
